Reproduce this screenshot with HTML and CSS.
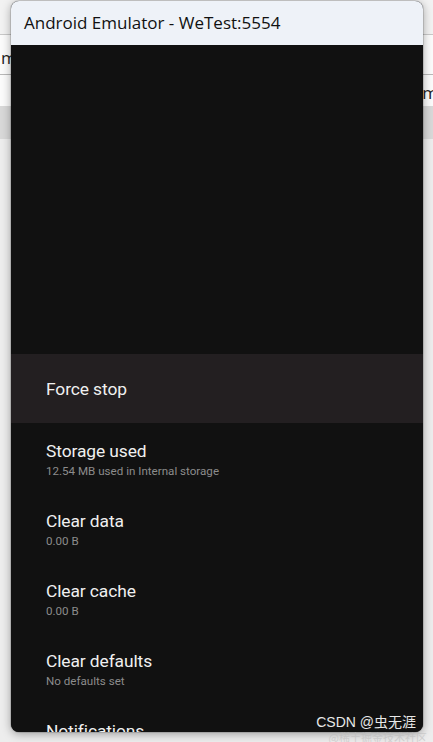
FILE: index.html
```html
<!DOCTYPE html>
<html>
<head>
<meta charset="utf-8">
<link rel="stylesheet" href="styles.css">
</head>
<body>
<div class="desk">
  <div class="bg-toolbar"></div>
  <div class="bg-row bg-row1"><span class="bg-l">m</span></div>
  <div class="bg-row bg-row2"><span class="bg-r">m</span></div>
  <div class="bg-band"></div>
  <div class="bg-rest"></div>
</div>

<div class="window">
  <div class="titlebar">Android Emulator - WeTest:5554</div>
  <div class="screen">
    <div class="blank"></div>
    <div class="item force"><div class="title">Force stop</div></div>
    <div class="item"><div class="title">Storage used</div><div class="sub">12.54 MB used in Internal storage</div></div>
    <div class="item"><div class="title">Clear data</div><div class="sub">0.00 B</div></div>
    <div class="item"><div class="title">Clear cache</div><div class="sub">0.00 B</div></div>
    <div class="item"><div class="title">Clear defaults</div><div class="sub">No defaults set</div></div>
    <div class="item last"><div class="title">Notifications</div><div class="sub">&nbsp;</div></div>
  </div>
</div>

<div class="watermark">CSDN @虫无涯</div>
<div class="watermark2">@稀土掘金技术社区</div>
</body>
</html>
```

FILE: styles.css
```css
html, body {
  margin: 0;
  padding: 0;
  width: 433px;
  height: 742px;
  overflow: hidden;
}
body {
  position: relative;
  background: #ececec;
  font-family: "Open Sans", "Noto Sans", sans-serif;
}
.desk {
  display: flex;
  flex-direction: column;
  height: 742px;
}
.bg-toolbar {
  height: 34px;
  background: #f2f2f2;
  border-bottom: 1px solid #c8c8c8;
}
.bg-row {
  background: #fbfbfb;
  position: relative;
  font-family: "Open Sans", sans-serif;
  font-size: 17px;
  color: #222;
}
.bg-row1 {
  height: 39px;
  border-bottom: 1px solid #b8b8b8;
}
.bg-row2 {
  height: 31px;
}
.bg-l {
  position: absolute;
  left: 1px;
  top: 11px;
}
.bg-r {
  position: absolute;
  right: -5px;
  top: 6px;
}
.bg-band {
  height: 33px;
  background: #d8d8d8;
}
.bg-rest {
  flex: 1;
  background: #ededed;
}

.window {
  position: absolute;
  left: 11px;
  top: 1px;
  width: 412px;
  height: 731px;
  border-radius: 8px;
  overflow: hidden;
  box-shadow: 0 2px 10px rgba(0,0,0,0.35), 0 0 0 1px rgba(0,0,0,0.12);
  display: flex;
  flex-direction: column;
  background: #111111;
}
.titlebar {
  height: 44px;
  flex: none;
  background: #eef2f8;
  color: #111;
  font-family: "Open Sans", "Noto Sans", sans-serif;
  font-size: 17px;
  line-height: 44px;
  padding-left: 13px;
  box-sizing: border-box;
}
.screen {
  flex: 1;
  background: #111111;
  display: flex;
  flex-direction: column;
  font-family: Roboto, sans-serif;
}
.blank {
  height: 309px;
  flex: none;
}
.item {
  height: 70px;
  flex: none;
  display: flex;
  flex-direction: column;
  justify-content: center;
  padding-left: 35px;
  padding-top: 2px;
  box-sizing: border-box;
}
.force {
  height: 69px;
  padding-top: 0;
  background: #231f21;
}
.title {
  color: #f0f0f0;
  font-size: 17.4px;
  line-height: 22px;
  letter-spacing: -0.1px;
}
.sub {
  color: #8c8c8c;
  font-size: 11.6px;
  line-height: 15px;
  margin-top: 2px;
}

.watermark {
  position: absolute;
  right: 17px;
  top: 712px;
  color: #e8e8e8;
  font-family: "Liberation Sans", "Noto Sans CJK SC", sans-serif;
  font-size: 14px;
  line-height: 20px;
}
.watermark2 {
  position: absolute;
  right: 6px;
  top: 731px;
  color: #bdbdbd;
  font-family: "Noto Sans CJK SC", sans-serif;
  font-size: 11px;
  line-height: 12px;
  opacity: 0.6;
}
```
